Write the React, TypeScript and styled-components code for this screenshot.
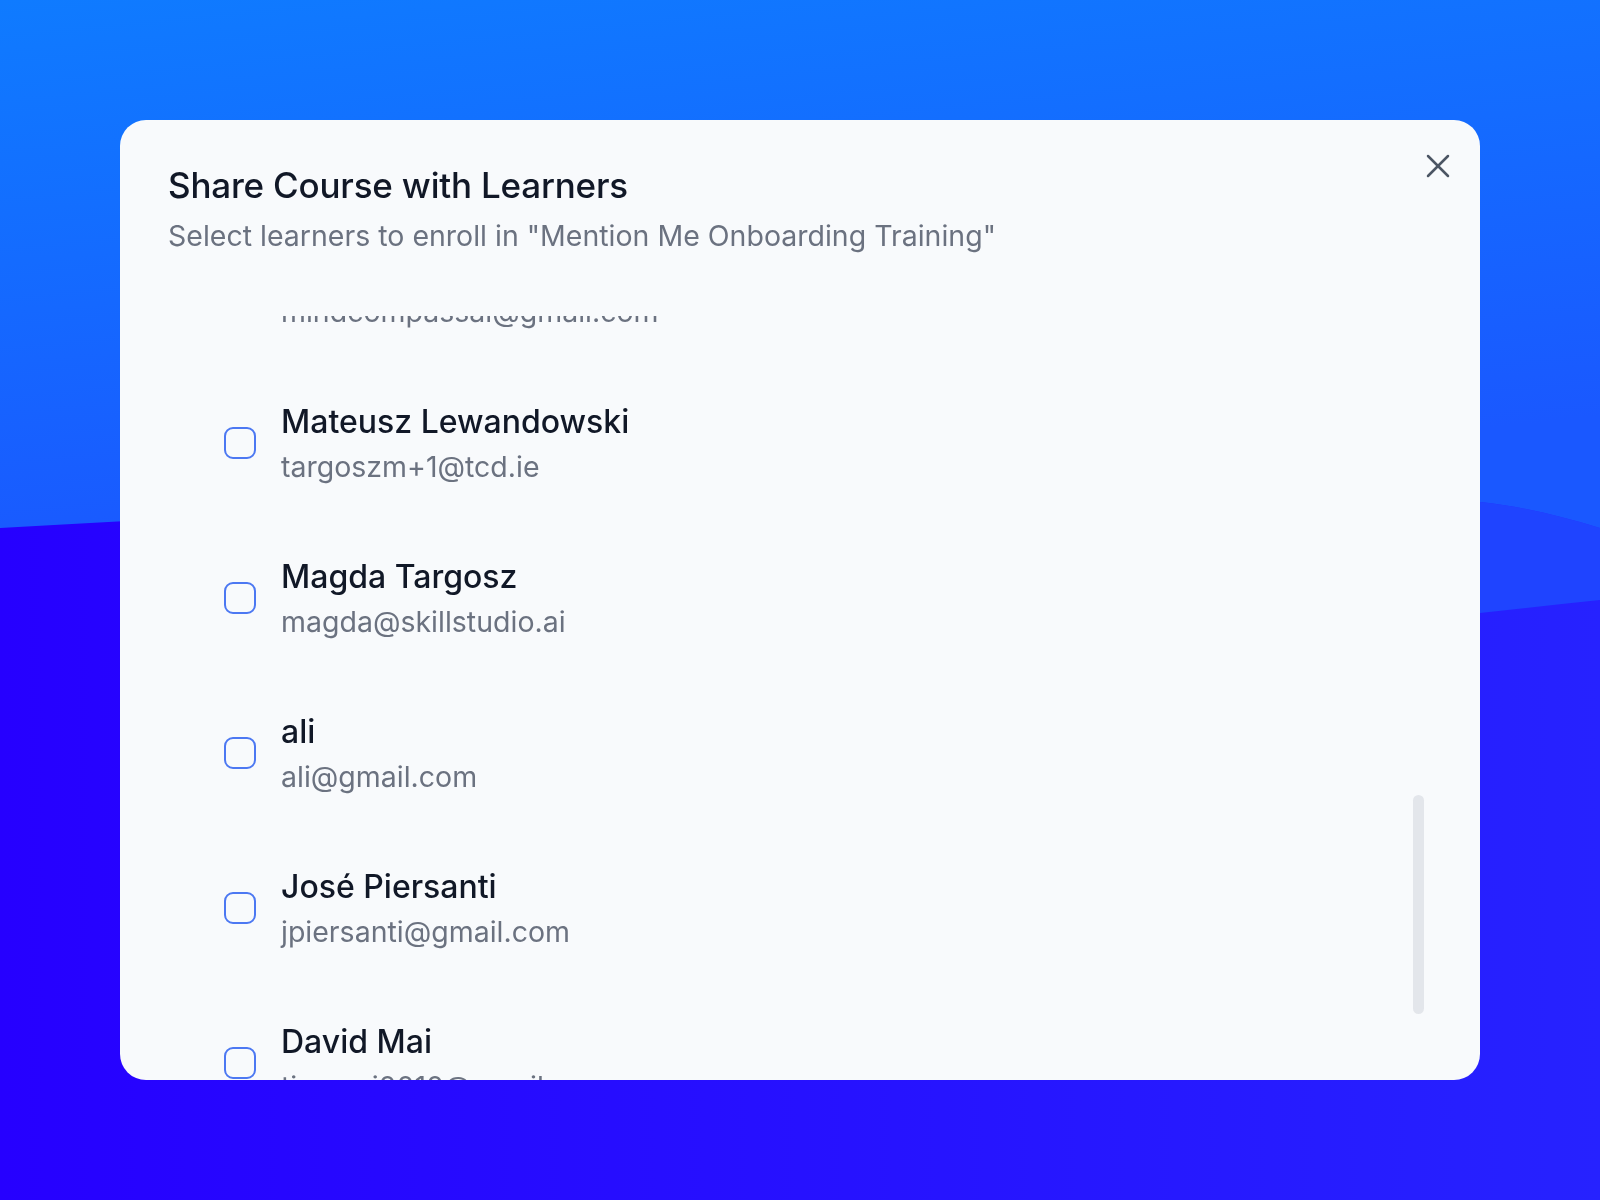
import { useLayoutEffect, useRef, useState } from "react";
import styled, { createGlobalStyle } from "styled-components";
import { X } from "lucide-react";

const GlobalStyle = createGlobalStyle`
  html, body {
    margin: 0;
    padding: 0;
    height: 100%;
  }
  body {
    font-family: Inter, "Noto Sans", "Liberation Sans", sans-serif;
    background: #2410ff;
    overflow: hidden;
  }
`

const learners = [
    { name: "Olivia Brennan", email: "olivia.brennan@gmail.com" },
    { name: "Conor Walsh", email: "cwalsh@tcd.ie" },
    { name: "Aisling Murphy", email: "aisling@skillstudio.ai" },
    { name: "Tomasz Nowak", email: "tnowak@outlook.com" },
    { name: "Priya Raman", email: "priya.raman@gmail.com" },
    { name: "Liam O'Connor", email: "liam@mentionme.com" },
    { name: "Sofia Rossi", email: "sofia.rossi@gmail.com" },
    { name: "Daniel Kim", email: "dkim@skillstudio.ai" },
    { name: "Niamh Kelly", email: "niamhk@gmail.com" },
    { name: "Ben Carter", email: "ben.carter@mentionme.com" },
    { name: "Mind Compass", email: "mindcompassai@gmail.com" },
    { name: "Mateusz Lewandowski", email: "targoszm+1@tcd.ie" },
    { name: "Magda Targosz", email: "magda@skillstudio.ai" },
    { name: "ali", email: "ali@gmail.com" },
    { name: "José Piersanti", email: "jpiersanti@gmail.com" },
    { name: "David Mai", email: "tienmai0010@gmail.com" },
    { name: "Hannah Doyle", email: "hdoyle@gmail.com" },
]

const Page = styled.div`
    position: relative;
    min-height: 100vh;
    display: flex;
    align-items: center;
    justify-content: center;
`
const Backdrop = styled.svg`
    position: fixed;
    inset: 0;
    width: 100%;
    height: 100%;
    z-index: 0;
`
const Modal = styled.div`
    position: relative;
    z-index: 1;
    width: 1360px;
    height: 960px;
    background-color: #f8fafc;
    border-radius: 26px;
    overflow: hidden;
    display: flex;
    flex-direction: column;
`
const Header = styled.div`
    padding: 44px 48px 0;
`
const Title = styled.h2`
    margin: 0;
    font-size: 35px;
    line-height: 42px;
    font-weight: 500;
    color: #111827;
    letter-spacing: -0.2px;
`
const Subtitle = styled.p`
    margin: 10px 0 0;
    font-size: 28.5px;
    line-height: 40px;
    color: #6b7280;
`
const CloseButton = styled.button`
    position: absolute;
    top: 26px;
    right: 22px;
    width: 40px;
    height: 40px;
    padding: 0;
    border: none;
    background: none;
    color: #4b5563;
    display: flex;
    align-items: center;
    justify-content: center;
    cursor: pointer;
`
const ScrollArea = styled.div`
    position: relative;
    flex: 1;
    min-height: 0;
    margin: 60px 56px 0 48px;
`
const Scroller = styled.div`
    height: 100%;
    overflow-y: auto;
    scrollbar-width: none;

    &::-webkit-scrollbar {
        display: none;
    }
`
const Thumb = styled.div`
    position: absolute;
    right: 0;
    width: 11px;
    border-radius: 6px;
    background: #e3e6eb;
`
const List = styled.ul`
    list-style: none;
    margin: 0;
    padding: 16px 0;
`
const Row = styled.li`
    display: flex;
    align-items: center;
    gap: 25px;
    padding: 33px 0 32px 56px;
`
const Checkbox = styled.span`
    width: 32px;
    height: 32px;
    box-sizing: border-box;
    border: 2px solid #4c78f2;
    border-radius: 9px;
    flex-shrink: 0;
    margin-top: -2px;
`
const Details = styled.div`
    display: flex;
    flex-direction: column;
`
const Name = styled.div`
    font-size: 32px;
    line-height: 46px;
    font-weight: 500;
    color: #111827;
`
const Email = styled.div`
    font-size: 28.5px;
    line-height: 44px;
    color: #6b7280;
`

function App() {
    const scrollRef = useRef<HTMLDivElement>(null)
    const [thumb, setThumb] = useState({ top: 0, height: 0 })

    useLayoutEffect(() => {
        const el = scrollRef.current
        if (!el) return
        el.scrollTop = 1671
        const ratio = el.clientHeight / el.scrollHeight
        const height = Math.round(el.clientHeight * ratio)
        const top = Math.round((el.scrollTop / (el.scrollHeight - el.clientHeight)) * (el.clientHeight - height))
        setThumb({ top, height })
    }, [])

    return (
        <>
            <GlobalStyle />
            <Page>
                <Backdrop viewBox="0 0 1600 1200" preserveAspectRatio="none">
                    <defs>
                        <linearGradient id="deep" x1="0" y1="0" x2="1" y2="0">
                            <stop offset="0" stopColor="#2600ff" />
                            <stop offset="1" stopColor="#2622ff" />
                        </linearGradient>
                        <linearGradient id="sky" x1="0" y1="0" x2="0.3" y2="1">
                            <stop offset="0" stopColor="#0f7bff" />
                            <stop offset="1" stopColor="#1a58ff" />
                        </linearGradient>
                    </defs>
                    <rect width="1600" height="1200" fill="url(#deep)" />
                    <path d="M1400 500 L1480 502 C1520 506 1560 516 1600 528 V600 C1560 604 1520 609 1480 613 L1400 620 Z" fill="#1f44ff" />
                    <path d="M0 0 H1600 V528 C1560 516 1520 506 1480 502 C1100 480 500 500 0 528 Z" fill="url(#sky)" />
                </Backdrop>
                <Modal>
                    <Header>
                        <Title>Share Course with Learners</Title>
                        <Subtitle>Select learners to enroll in "Mention Me Onboarding Training"</Subtitle>
                    </Header>
                    <CloseButton aria-label="Close">
                        <X size={40} strokeWidth={1.5} />
                    </CloseButton>
                    <ScrollArea>
                        <Scroller ref={scrollRef}>
                            <List>
                                {learners.map((l) => (
                                    <Row key={l.email}>
                                        <Checkbox />
                                        <Details>
                                            <Name>{l.name}</Name>
                                            <Email>{l.email}</Email>
                                        </Details>
                                    </Row>
                                ))}
                            </List>
                        </Scroller>
                        <Thumb style={{ top: thumb.top, height: thumb.height }} />
                    </ScrollArea>
                </Modal>
            </Page>
        </>
    );
}

export default App;
